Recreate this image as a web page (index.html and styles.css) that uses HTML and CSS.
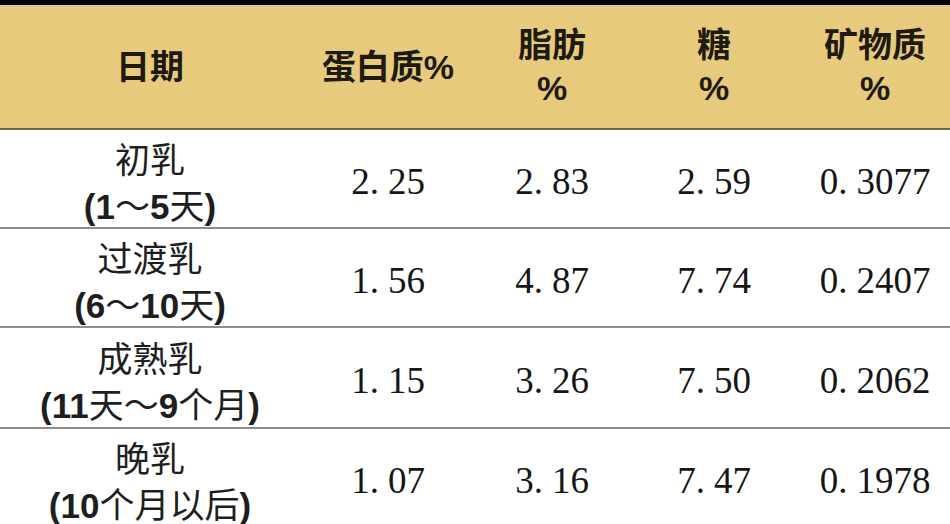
FILE: index.html
```html
<!DOCTYPE html>
<html lang="zh-CN">
<head>
<meta charset="utf-8">
<title>母乳成分</title>
<link rel="stylesheet" href="styles.css">
</head>
<body>
<div class="topband"></div>
<table class="milk">
  <colgroup>
    <col class="c1"><col class="c2"><col class="c3"><col class="c4"><col class="c5">
  </colgroup>
  <thead>
    <tr>
      <th>日期</th>
      <th>蛋白质%</th>
      <th>脂肪<br>%</th>
      <th>糖<br>%</th>
      <th>矿物质<br>%</th>
    </tr>
  </thead>
  <tbody>
    <tr>
      <td class="label"><span class="line">初乳</span><span class="line"><span class="b">(1</span>～<span class="b">5</span>天<span class="b">)</span></span></td>
      <td class="num">2<span class="dot">.</span>25</td>
      <td class="num">2<span class="dot">.</span>83</td>
      <td class="num">2<span class="dot">.</span>59</td>
      <td class="num">0<span class="dot">.</span>3077</td>
    </tr>
    <tr>
      <td class="label"><span class="line">过渡乳</span><span class="line"><span class="b">(6</span>～<span class="b">10</span>天<span class="b">)</span></span></td>
      <td class="num">1<span class="dot">.</span>56</td>
      <td class="num">4<span class="dot">.</span>87</td>
      <td class="num">7<span class="dot">.</span>74</td>
      <td class="num">0<span class="dot">.</span>2407</td>
    </tr>
    <tr class="tall">
      <td class="label"><span class="line">成熟乳</span><span class="line"><span class="b">(11</span>天～<span class="b">9</span>个月<span class="b">)</span></span></td>
      <td class="num">1<span class="dot">.</span>15</td>
      <td class="num">3<span class="dot">.</span>26</td>
      <td class="num">7<span class="dot">.</span>50</td>
      <td class="num">0<span class="dot">.</span>2062</td>
    </tr>
    <tr class="last">
      <td class="label"><span class="line">晚乳</span><span class="line"><span class="b">(10</span>个月以后<span class="b">)</span></span></td>
      <td class="num">1<span class="dot">.</span>07</td>
      <td class="num">3<span class="dot">.</span>16</td>
      <td class="num">7<span class="dot">.</span>47</td>
      <td class="num">0<span class="dot">.</span>1978</td>
    </tr>
  </tbody>
</table>
</body>
</html>
```

FILE: styles.css
```css
html, body {
  margin: 0;
  padding: 0;
  background: #ffffff;
  width: 950px;
  height: 524px;
  overflow: hidden;
}

.topband {
  height: 5px;
  background: #050505;
  border-bottom: 1px solid #d8c08c;
}

.milk {
  width: 950px;
  table-layout: fixed;
  border-collapse: collapse;
  color: #1c1a16;
}

.c1 { width: 300px; }
.c2 { width: 176px; }
.c3 { width: 152px; }
.c4 { width: 172px; }
.c5 { width: 150px; }

.milk th {
  height: 122px;
  padding: 0;
  background: #e7ca7b;
  border-bottom: 2px solid #6b6752;
  font-family: "Liberation Sans", "Noto Sans CJK SC", sans-serif;
  font-size: 34px;
  font-weight: 700;
  line-height: 43px;
  text-align: center;
  vertical-align: middle;
  color: #1e1a10;
}

.milk td {
  height: 98px;
  padding: 5px 0 0;
  box-sizing: border-box;
  border-bottom: 2px solid #8c8c8a;
  text-align: center;
  vertical-align: middle;
}

.milk tr.tall td {
  height: 101px;
}

.milk tr.last td {
  border-bottom: none;
}

.label {
  font-family: "Noto Sans CJK SC", sans-serif;
  font-size: 35px;
  color: #1e1e1e;
}

.label .line {
  display: block;
  height: 46px;
  line-height: 46px;
  overflow: visible;
  white-space: nowrap;
}

.label .b {
  font-family: "Liberation Sans", sans-serif;
  font-weight: 700;
}

.num {
  font-family: "Liberation Serif", serif;
  font-size: 37px;
  color: #161616;
}

.num .dot {
  margin-right: 9px;
}
```
